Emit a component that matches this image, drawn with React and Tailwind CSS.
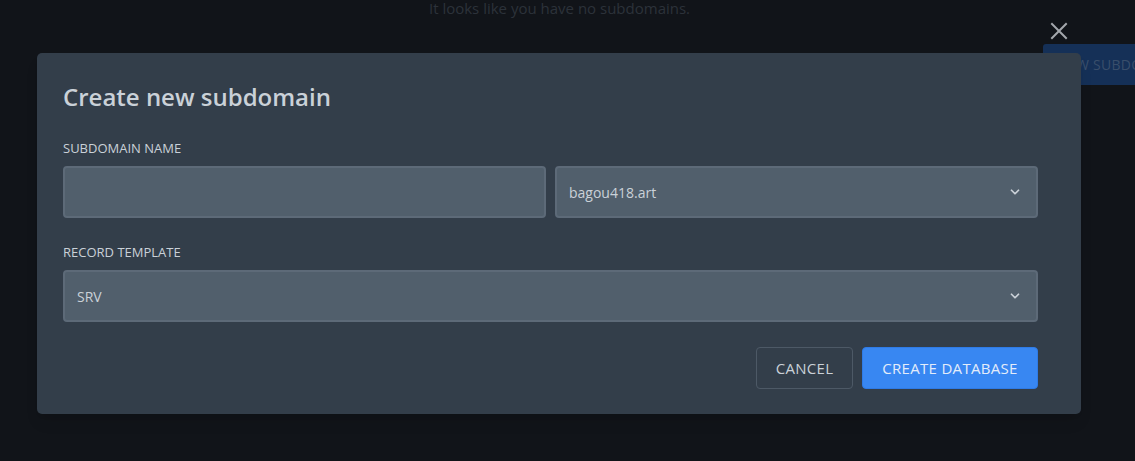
import React from "react";

function Chevron() {
  return (
    <svg width="14" height="14" viewBox="0 0 24 24" fill="none" stroke="#cad1d8" strokeWidth="3" strokeLinecap="round" strokeLinejoin="round">
      <path d="M6 9l6 6 6-6" />
    </svg>
  );
}

export default function App() {
  return (
    <div className="relative w-[1135px] h-[461px] overflow-hidden bg-[#111419]" style={{ fontFamily: '"Open Sans", "Noto Sans", sans-serif' }}>
      {/* background page */}
      <div className="flex justify-center pr-[16px]">
        <p className="text-[15px] leading-[16px] text-[#2c323a]">It looks like you have no subdomains.</p>
      </div>
      <div className="absolute left-[1043px] top-[44px] h-[41px] w-[92px] overflow-hidden whitespace-nowrap rounded-l-[3px] bg-[#153057] flex items-center pl-[14px] text-[14px] tracking-[0.02em] text-[#394e6b]">NEW SUBDOMAIN</div>

      {/* close button */}
      <button className="absolute left-[1050px] top-[22px] w-[18px] h-[18px] flex items-center justify-center">
        <svg width="18" height="18" viewBox="0 0 18 18" fill="none" stroke="#a3a7ac" strokeWidth="2" strokeLinecap="square">
          <path d="M2 2L16 16M16 2L2 16" />
        </svg>
      </button>

      {/* modal */}
      <div className="absolute left-[37px] top-[53px] w-[1044px] h-[361px] rounded-[5px] bg-[#333e4a] pl-[26px] pr-[43px] pt-[28px] shadow-lg">
        <h2 className="text-[24px] leading-[32px] font-semibold text-[#cad1d8]">Create new subdomain</h2>

        <label className="block mt-[27px] text-[13px] leading-[16px] uppercase text-[#cad1d8]">Subdomain Name</label>
        <div className="mt-[10px] grid grid-cols-2 gap-[9px]">
          <input className="h-[52px] rounded-[4px] border-2 border-[#5d6a78] bg-[#515f6c] px-[14px] text-[14px] text-[#cad1d8] outline-none" />
          <div className="h-[52px] rounded-[4px] border-2 border-[#5d6a78] bg-[#515f6c] pl-[12px] pr-[14px] flex items-center justify-between text-[14px] text-[#cad1d8]">
            <span>bagou418.art</span>
            <Chevron />
          </div>
        </div>

        <label className="block mt-[26px] text-[13px] leading-[16px] uppercase text-[#cad1d8]">Record Template</label>
        <div className="mt-[10px] h-[52px] rounded-[4px] border-2 border-[#5d6a78] bg-[#515f6c] pl-[12px] pr-[14px] flex items-center justify-between text-[14px] text-[#cad1d8]">
          <span>SRV</span>
          <Chevron />
        </div>

        <div className="mt-[25px] flex justify-end gap-[9px]">
          <button className="h-[42px] w-[97px] rounded-[4px] border border-[#4d5966] bg-transparent text-[15px] tracking-[0.02em] text-[#cad1d8]">CANCEL</button>
          <button className="h-[42px] w-[176px] rounded-[4px] border border-[#2f7be6] bg-[#3887f2] text-[15px] tracking-[0.02em] text-[#e3ecfa]">CREATE DATABASE</button>
        </div>
      </div>
    </div>
  );
}
